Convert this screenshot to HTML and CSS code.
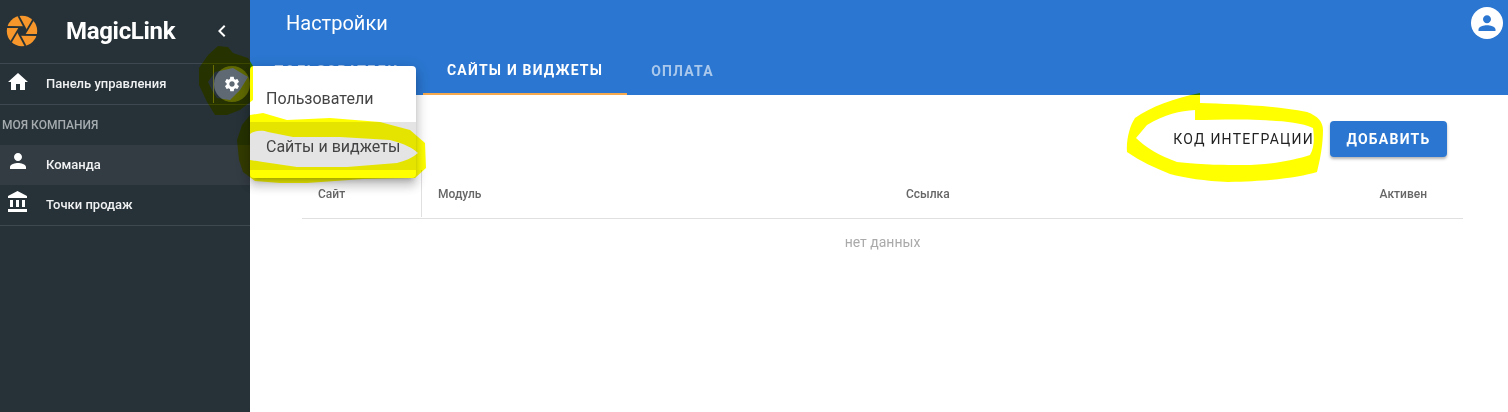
FILE: index.html
```html
<!DOCTYPE html>
<html lang="ru">
<head>
<meta charset="utf-8">
<title>MagicLink</title>
<link rel="stylesheet" href="styles.css">
</head>
<body>
<div class="app">
  <aside class="sidebar">
    <div class="brand">
      <svg class="logo" viewBox="0 0 32 32" width="32" height="32">
        <circle cx="16" cy="16" r="15.2" fill="#f7962a"/>
        <g stroke="#263238" stroke-width="1.8" fill="none">
          <path d="M20.5 16 L12.5 1"/>
          <path d="M18.2 19.900 L27 5"/>
          <path d="M13.800 19.900 L31 20"/>
          <path d="M11.500 16 L19.500 31"/>
          <path d="M13.800 12.100 L5 27"/>
          <path d="M18.200 12.100 L1 12"/>
        </g>
        <path d="M20.500 16 18.200 19.900 13.800 19.900 11.500 16 13.800 12.100 18.200 12.100z" fill="#263238"/>
      </svg>
      <span class="brand-name">MagicLink</span>
      <svg class="chevron" viewBox="0 0 24 24" width="24" height="24"><path d="M15.410 7.410 14 6l-6 6 6 6 1.410-1.410L10.830 12z" fill="#fff"/></svg>
    </div>
    <div class="nav-row nav-dash">
      <svg class="nav-icon icon-home" viewBox="0 0 24 24" width="24" height="24"><path d="M10 20v-6h4v6h5v-8h3L12 3 2 12h3v8z"/></svg>
      <span class="nav-label label-up">Панель управления</span>
      <span class="gear-wrap">
        <span class="gear-btn">
          <svg viewBox="0 0 24 24" width="18" height="18"><path fill="#fff" d="M19.140 12.940c.04-.3.06-.61.06-.94 0-.32-.02-.64-.07-.94l2.030-1.580c.18-.14.23-.41.12-.61l-1.920-3.320c-.12-.22-.37-.29-.59-.22l-2.390.96c-.5-.38-1.030-.7-1.620-.94l-.36-2.540c-.04-.24-.24-.41-.48-.41h-3.840c-.24 0-.43.17-.47.41l-.36 2.540c-.59.24-1.130.57-1.620.94l-2.390-.96c-.22-.08-.47 0-.59.22L2.740 8.870c-.12.21-.08.47.12.61l2.030 1.580c-.05.3-.09.63-.09.94s.02.64.07.94l-2.030 1.580c-.18.14-.23.41-.12.61l1.920 3.320c.12.22.37.29.59.22l2.390-.96c.5.38 1.030.7 1.620.94l.36 2.540c.05.24.24.41.48.41h3.840c.24 0 .44-.17.47-.41l.36-2.540c.59-.24 1.130-.56 1.620-.94l2.390.96c.22.08.47 0 .59-.22l1.920-3.320c.12-.22.07-.47-.12-.61l-2.010-1.580zM12 15.600c-1.980 0-3.600-1.620-3.600-3.600s1.620-3.600 3.600-3.600 3.600 1.620 3.600 3.600-1.620 3.600-3.600 3.600z"/></svg>
        </span>
      </span>
    </div>
    <div class="section-title">МОЯ КОМПАНИЯ</div>
    <div class="nav-row nav-active">
      <svg class="nav-icon icon-person" viewBox="0 0 24 24" width="24" height="24"><path d="M12 12c2.210 0 4-1.790 4-4s-1.790-4-4-4-4 1.790-4 4 1.790 4 4 4zm0 2c-2.670 0-8 1.340-8 4v2h16v-2c0-2.660-5.330-4-8-4z"/></svg>
      <span class="nav-label label-up">Команда</span>
    </div>
    <div class="nav-row nav-last">
      <svg class="nav-icon icon-bank" viewBox="0 0 24 24" width="24" height="24"><path d="M4 10v7h3v-7H4zm6 0v7h3v-7h-3zM2 22h19v-3H2v3zm14-12v7h3v-7h-3zm-4.500-9L2 6v2h19V6l-9.500-5z"/></svg>
      <span class="nav-label label-up">Точки продаж</span>
    </div>
  </aside>
  <main class="main">
    <header class="topbar">
      <div class="title-row">
        <h1 class="page-title">Настройки</h1>
        <svg class="avatar" viewBox="0 0 32 32" width="32" height="32">
          <circle cx="16" cy="16" r="16" fill="#fff"/>
          <path fill="#2a76d0" d="M16 16.200c2.200 0 4-1.800 4-4s-1.800-4-4-4-4 1.800-4 4 1.800 4 4 4zm0 2c-2.900 0-8.500 1.400-8.500 4.100V24h17v-1.700c0-2.700-5.600-4.100-8.500-4.100z"/>
        </svg>
      </div>
      <nav class="tabs">
        <span class="tab">ПОЛЬЗОВАТЕЛИ</span>
        <span class="tab tab-active">САЙТЫ И ВИДЖЕТЫ</span>
        <span class="tab">ОПЛАТА</span>
      </nav>
    </header>
    <section class="content">
      <div class="actions">
        <span class="btn-text">КОД ИНТЕГРАЦИИ</span>
        <span class="btn-primary">ДОБАВИТЬ</span>
      </div>
      <div class="table">
        <div class="thead">
          <span class="col-site">Сайт</span>
          <span class="col-module">Модуль</span>
          <span class="col-link">Ссылка</span>
          <span class="col-active">Активен</span>
        </div>
        <div class="empty">нет данных</div>
      </div>
    </section>
  </main>
</div>
<div class="menu">
  <div class="menu-item">Пользователи</div>
  <div class="menu-item menu-item-hover">Сайты и виджеты</div>
</div>
<svg class="scribble" viewBox="0 0 1508 412" width="1508" height="412">
  <path fill-rule="evenodd" fill="#ff0" d="M218 46 L228 47 L233 53 L248 58 L253 66 L253 100 L240 110 L227 115 L215 115 L207 102 L199 85 L199 68 L208 55Z M233 68 L215 72 L208 82 L213 92 L217 98 L230 100 L240 90 L248 77Z"/>
  <path fill-rule="evenodd" fill="#ff0" d="M250 115 L263 113 L287 120 L330 118 L380 122 L410 130 L425 143 L426 168 L415 178 L363 179 L307 183 L280 183 L255 181 L243 172 L239 160 L237 140 L242 125Z M250 134 C255 130 263 130 268 132 L293 137 L340 137 L390 140 C405 144 413 148 418 153 C412 158 405 161 397 163 L347 167 L297 167 L263 162 L250 160Z"/>
  <path fill-rule="evenodd" fill="#ff0" d="M1200 93 L1200 103 C1230 104 1270 105 1307 112 C1318 116 1323 122 1323 130 C1323 145 1320 160 1317 172 C1300 177 1275 181 1228 182 C1205 181 1185 178 1170 174 C1155 168 1140 161 1127 152 C1126 140 1130 125 1135 118 C1150 107 1175 98 1200 93Z M1195 110 C1180 111 1165 114 1147 125 L1136 138 C1145 147 1160 156 1177 162 C1205 165 1225 165 1243 165 C1270 165 1295 160 1310 155 C1315 147 1314 135 1313 128 C1300 122 1280 121 1260 120 C1235 119 1215 120 1195 120Z"/>
</svg>
</body>
</html>
```
FILE: styles.css
```css
* { box-sizing: border-box; }
html, body { margin: 0; height: 100%; overflow: hidden; }
body { font-family: Roboto, "Liberation Sans", sans-serif; background: #fff; color: #333; }
.app { display: flex; width: 1508px; height: 412px; }

.sidebar { width: 250px; flex: none; background: #263238; color: #fff; }
.brand { height: 64px; display: flex; align-items: center; padding: 0 16px 2px 6px; border-bottom: 1px solid #3d4850; }
.logo { flex: none; }
.brand-name { font-size: 24px; font-weight: 700; margin-left: 28px; letter-spacing: -0.32px; flex: 1; }
.chevron { flex: none; }
.nav-row { height: 40px; display: flex; align-items: center; padding-left: 6px; font-size: 13px; font-weight: 500; color: #f0f1f2; }
.nav-dash { height: 41px; border-bottom: 1px solid #3d4850; position: relative; }
.nav-last { height: 41px; border-bottom: 1px solid #3d4850; }
.nav-active { background: #333b43; }
.nav-icon { fill: #fff; flex: none; }
.icon-home { margin-bottom: 5px; }
.icon-person { margin-bottom: 8px; }
.icon-bank { margin-bottom: 7px; }
.nav-label { margin-left: 16px; }
.label-up { margin-bottom: 2px; }
.gear-wrap { position: absolute; left: 213px; top: 1px; height: 38px; width: 37px; border-left: 1px solid #6a6f30; display: flex; align-items: center; }
.gear-btn { width: 36px; height: 36px; border-radius: 50%; background: #5f6973; display: flex; align-items: center; justify-content: center; }
.section-title { height: 40px; padding-left: 2px; display: flex; align-items: center; font-size: 12px; font-weight: 500; color: #a5abaf; }

.main { flex: 1; min-width: 0; display: flex; flex-direction: column; }
.topbar { height: 95px; background: #2a76d0; color: #fff; padding-left: 24px; }
.title-row { height: 48px; display: flex; align-items: center; justify-content: space-between; padding: 0 5px 2px 12px; }
.page-title { margin: 0; font-size: 20px; font-weight: 400; line-height: 24px; }
.tabs { display: flex; height: 47px; }
.tab { height: 47px; padding: 0 24px 2px; display: flex; align-items: center; font-size: 14px; font-weight: 700; letter-spacing: 1.2px; color: rgba(255,255,255,.6); }
.tab:first-child { width: 149px; padding: 0 0 2px; }
.tab-active { color: #fff; border-bottom: 2px solid #f7a94e; }

.content { flex: 1; padding: 26px 45px 0 52px; }
.actions { display: flex; justify-content: flex-end; align-items: center; height: 36px; padding-right: 16px; }
.btn-text { font-size: 14px; font-weight: 400; letter-spacing: 1.25px; color: #222; margin-right: 16px; }
.btn-primary { width: 117px; height: 36px; border-radius: 4px; background: #2a76d0; color: #fff; font-size: 14px; font-weight: 700; letter-spacing: 1.25px; display: flex; align-items: center; justify-content: center; box-shadow: 0 2px 3px rgba(0,0,0,.3); }
.table { margin-top: 13px; }
.thead { height: 49px; padding-bottom: 1px; border-bottom: 1px solid #e0e0e0; display: flex; align-items: center; font-size: 12px; font-weight: 500; color: #666; }
.col-site { width: 120px; height: 100%; padding-left: 16px; display: flex; align-items: center; border-right: 1px solid #e0e0e0; }
.col-module { padding-left: 16px; width: 484px; }
.col-link { flex: 1; }
.col-active { padding-right: 36px; }
.empty { height: 46px; display: flex; align-items: center; justify-content: center; font-size: 14px; color: #aaa; }

.menu { position: absolute; left: 250px; top: 66px; width: 166px; height: 112px; padding: 8px 0; background: #fff; border-radius: 4px; box-shadow: 0 5px 5px -3px rgba(0,0,0,.2), 0 8px 10px 1px rgba(0,0,0,.14), 0 3px 14px 2px rgba(0,0,0,.12); }
.menu-item { height: 48px; padding-left: 16px; display: flex; align-items: center; font-size: 16px; color: #444; }
.menu-item-hover { background: #e4e4e4; }
.scribble { position: absolute; left: 0; top: 0; mix-blend-mode: multiply; pointer-events: none; }
```
